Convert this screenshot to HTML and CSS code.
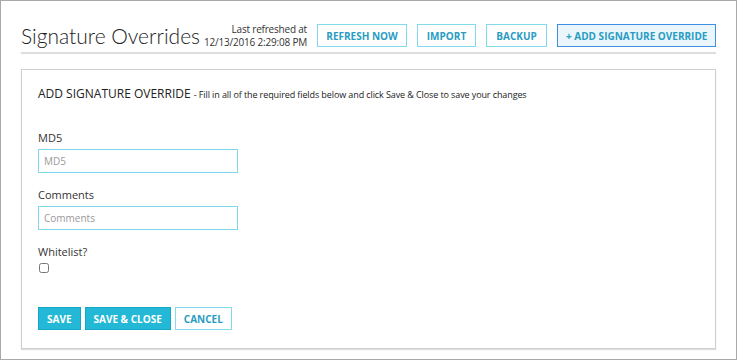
FILE: index.html
```html
<!DOCTYPE html>
<html lang="en">

<head>
    <meta charset="UTF-8">
    <title>Signature Overrides</title>
    <link rel="stylesheet" href="styles.css">
</head>

<body>
    <div class="frame">
        <!-- Page header -->
        <header class="page-header">
            <h1>Signature Overrides</h1>
            <div class="refreshed">
                <span>Last refreshed at</span>
                <span>12/13/2016 2:29:08 PM</span>
            </div>
            <div class="actions">
                <button class="btn btn-refresh">REFRESH NOW</button>
                <button class="btn btn-import">IMPORT</button>
                <button class="btn btn-backup">BACKUP</button>
                <button class="btn btn-active">+ ADD SIGNATURE OVERRIDE</button>
            </div>
        </header>

        <!-- Add form -->
        <div class="panel">
            <h2>ADD SIGNATURE OVERRIDE <small>- Fill in all of the required fields below and click Save &amp; Close to save your changes</small></h2>

            <div class="field">
                <label for="md5">MD5</label>
                <input type="text" id="md5" placeholder="MD5">
            </div>

            <div class="field">
                <label for="comments">Comments</label>
                <input type="text" id="comments" placeholder="Comments">
            </div>

            <div class="field">
                <label for="whitelist">Whitelist?</label>
                <input type="checkbox" id="whitelist">
            </div>

            <div class="form-buttons">
                <button class="btn btn-fill">SAVE</button>
                <button class="btn btn-fill">SAVE &amp; CLOSE</button>
                <button class="btn">CANCEL</button>
            </div>
        </div>
    </div>
</body>

</html>
```

FILE: styles.css
```css
/* Basic reset */
* {
    margin: 0;
    padding: 0;
    box-sizing: border-box;
}

body {
    font-family: 'Open Sans', sans-serif;
    color: #333;
    background: #fff;
}

.frame {
    width: 737px;
    height: 360px;
    border: 1px solid #a9a9a9;
    padding: 0 20px;
}

/* Header */
.page-header {
    display: flex;
    align-items: flex-end;
    height: 53px;
    padding-bottom: 5px;
    border-bottom: 2px solid #ddd;
    white-space: nowrap;
}

.page-header h1 {
    font-family: 'Lato', sans-serif;
    font-weight: 300;
    font-size: 21px;
    line-height: 26px;
    color: #222;
    margin-bottom: -2px;
}

.refreshed {
    display: flex;
    flex-direction: column;
    align-items: flex-end;
    margin-left: auto;
    margin-bottom: -2px;
    font-size: 10px;
    letter-spacing: -0.2px;
    line-height: 13px;
    color: #333;
}

.actions {
    display: flex;
    gap: 10px;
    margin-left: 10px;
    flex-shrink: 0;
}

/* Buttons */
.btn {
    font-family: 'Open Sans', sans-serif;
    font-weight: 700;
    font-size: 10px;
    color: #2a9cc2;
    background: #fff;
    border: 1px solid #82dbec;
    height: 23px;
    padding: 0 8px;
    white-space: nowrap;
    cursor: pointer;
}

.btn-refresh {
    width: 90px;
}

.btn-import {
    width: 59px;
}

.btn-backup {
    width: 61px;
}

.btn-active {
    width: 159px;
    border-color: #3d8fe0;
    background: #eaf6fc;
}

.btn-fill {
    background: #22b8d6;
    border-color: #14a6c6;
    color: #fff;
}

/* Panel */
.panel {
    margin-top: 15px;
    height: 280px;
    border: 1px solid #cfcfcf;
    box-shadow: 0 1px 1px #ddd;
    padding: 15px 16px 18px;
}

.panel h2 {
    font-weight: 400;
    font-size: 12px;
    color: #222;
    margin-bottom: 29px;
}

.panel h2 small {
    font-size: 9px;
    letter-spacing: -0.1px;
}

.field {
    display: flex;
    flex-direction: column;
    align-items: flex-start;
    margin-bottom: 15px;
}

.field label {
    font-size: 11px;
    line-height: 14px;
    margin-bottom: 4px;
}

.field input[type="text"] {
    width: 200px;
    height: 24px;
    border: 1px solid #7fd9ec;
    padding: 0 5px;
    font-family: 'Open Sans', sans-serif;
    font-size: 10px;
    color: #555;
}

.field input::placeholder {
    color: #999;
}

.field input[type="checkbox"] {
    width: 10px;
    height: 10px;
    margin-left: 1px;
}

.form-buttons {
    display: flex;
    gap: 4px;
    margin-top: 34px;
}
```
